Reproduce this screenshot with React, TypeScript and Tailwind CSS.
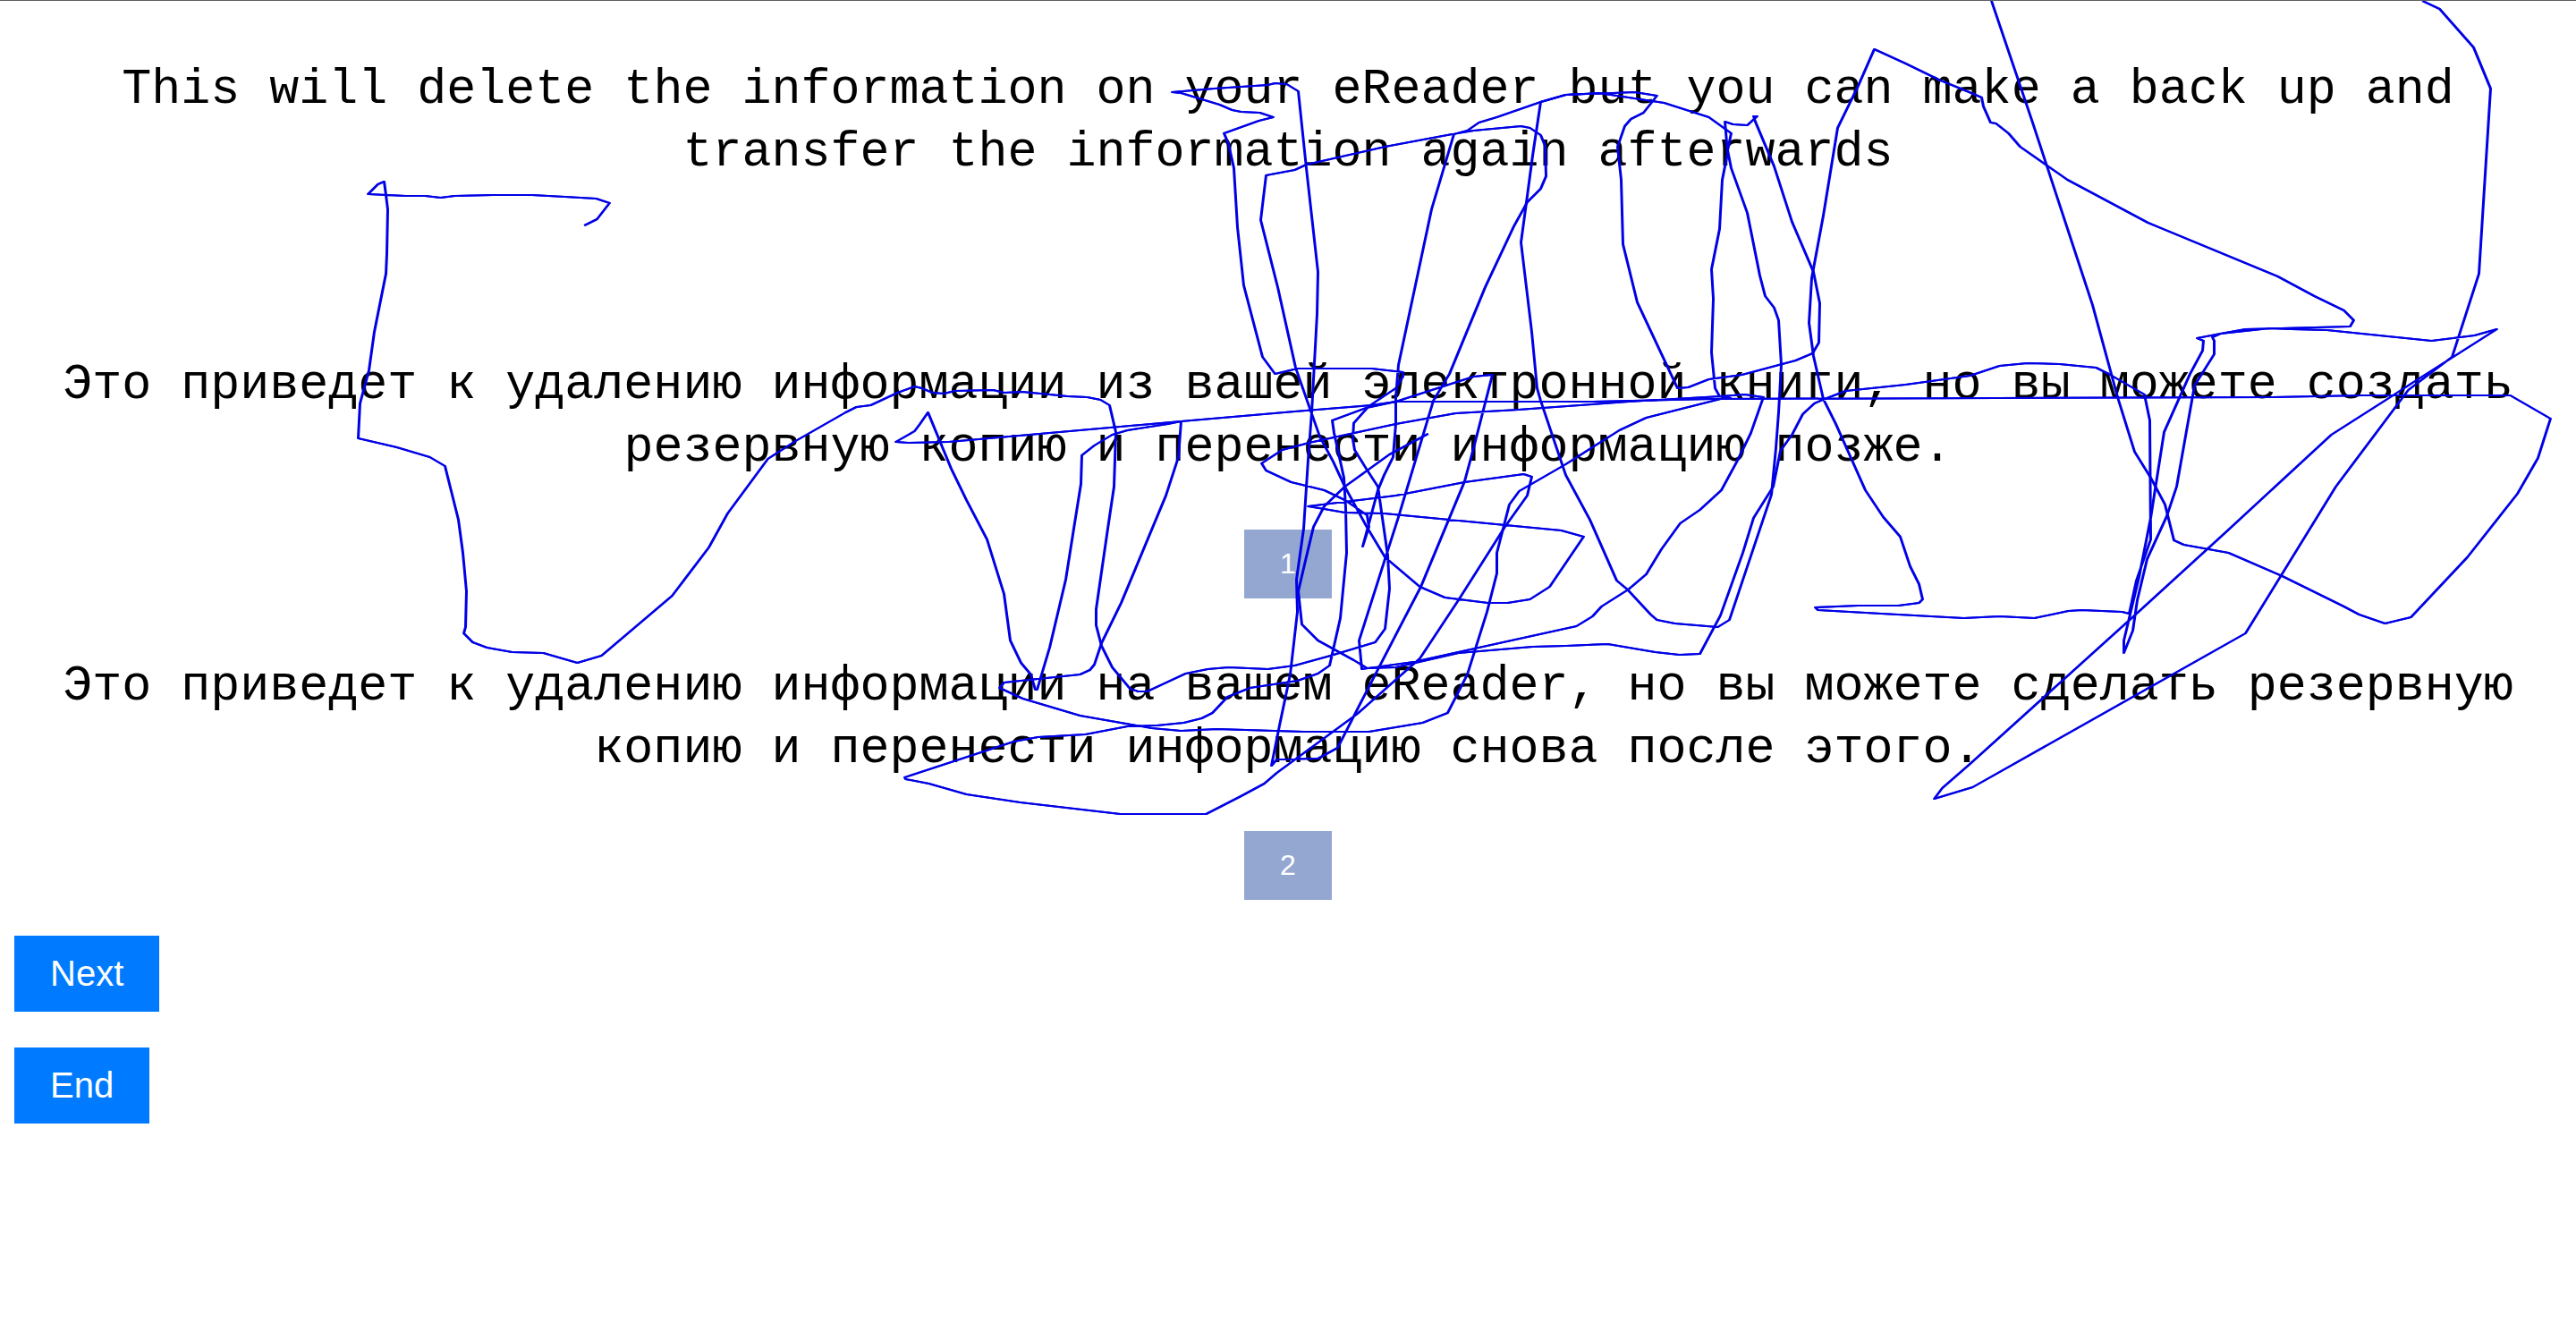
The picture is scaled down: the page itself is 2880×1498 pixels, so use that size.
const pen = [
  // left sweep and first loops
  '653,251 667,244 681,226 666,221 631,219 594,217 551,217 508,218 492,220 475,218 453,218 411,216 422,205 429,202 431,217 433,233 432,283 431,305 418,370 412,413 402,450 400,489 443,499 480,510 497,520 512,580 517,617 521,660 520,700 518,707 528,717 544,723 572,728 607,729 645,740 672,732 751,665 792,611 813,573 858,512 889,492 945,460 957,454 973,452 1003,438 1022,431 1030,433 1042,438 1055,439 1067,436 1110,435 1122,438 1142,437 1163,439 1193,442 1215,443 1230,446 1240,452 1247,482 1245,543 1238,590 1225,680 1225,698 1231,721 1243,745 1263,769 1272,772 1282,772 1325,752 1350,747 1373,745 1417,747 1447,743 1487,732 1537,717 1548,702 1553,657 1551,620 1540,543 1527,523 1514,502 1512,490 1513,472 1530,453 1560,433 1568,420 1568,415 1533,411 1450,411 1425,417 1411,398 1390,318 1383,253 1379,187 1373,160 1368,148 1407,134 1423,130 1408,125 1387,124 1377,122 1363,116 1320,103 1310,102 1357,98 1417,94 1425,92 1438,93 1451,101 1460,187 1473,303 1472,350 1466,460 1462,513 1457,590 1449,647 1450,683 1442,753 1430,810 1421,855 1427,848 1473,847 1495,835 1518,790 1563,703 1588,655 1637,537 1647,500 1668,418 1647,420 1560,448 1527,455 1489,469 1491,483 1502,533 1504,567 1505,617 1498,690 1486,743 1473,752 1450,760 1397,768 1372,778 1355,796 1343,802 1323,807 1293,810 1260,811 1213,820 1160,823 1133,828 1011,868 1012,870 1038,875 1080,887 1140,896 1252,909 1348,909 1387,889 1413,875 1427,863 1517,797 1587,735 1630,670 1682,588 1707,553 1712,532 1703,529 1637,538 1560,553 1462,565 1480,568 1503,572 1547,573 1745,592 1770,599 1732,655 1710,669 1685,673 1663,673 1615,667 1587,655 1548,622 1527,587 1503,543 1490,515 1475,487 1463,453 1448,410 1428,320 1409,245 1415,195 1447,189 1460,183 1548,163 1623,149 1647,145 1700,140 1710,142 1722,150 1727,162 1728,196 1722,210 1707,225 1692,252 1660,320 1620,417 1602,447 1593,477 1563,577 1547,627 1519,715 1522,747 1580,739 1630,728 1762,699 1780,688 1790,677 1820,658 1840,641 1857,613 1878,584 1900,569 1924,547 1943,512 1957,483 1971,443 1950,440 1923,442 1820,448 1697,457 1627,461 1560,473 1463,494 1433,502 1410,517 1415,525 1443,538 1480,547 1503,558 1528,575 1530,588 1523,610 1540,547 1547,530 1557,510 1560,473 1560,443 1563,407 1600,233 1625,149 1640,145 1653,136 1673,130 1722,113 1750,105 1827,102 1852,106 1837,125 1823,132 1816,140 1808,163 1812,200 1814,272 1830,337 1875,433 1887,432 1910,423 1947,418 2007,402 2026,394 2033,382 2034,338 2027,303 2003,247 1983,185 1962,135 1960,129 1964,129 1953,139 1937,138 1928,135 1931,170 1925,200 1922,255 1915,290 1913,300 1915,333 1913,393 1917,433 1922,442 1935,444',
  // centre loops and the long baseline to the right edge
  '1923,445 1840,466 1810,480 1750,518 1698,548 1687,563 1673,617 1673,640 1662,683 1640,753 1618,796 1590,807 1530,817 1457,817 1360,814 1320,816 1287,813 1207,799 1143,780 1117,768 1122,762 1207,753 1218,748 1223,742 1231,718 1253,673 1303,553 1317,510 1320,470 1305,473 1260,480 1243,485 1223,497 1209,508 1208,540 1200,590 1191,647 1173,723 1159,770 1157,770 1152,753 1141,740 1129,715 1122,663 1103,602 1080,558 1063,523 1037,460 1028,473 1022,481 1001,493 1015,494 1060,493 1320,470 1447,459 1533,452 1560,448 1780,448 1913,445 2232,444 2540,443 2640,441 2806,441 2851,467 2837,511 2814,551 2758,622 2695,689 2666,696 2637,686 2620,677 2551,643 2491,617 2441,608 2430,603 2420,563 2404,533 2386,504 2367,443 2339,340 2271,133 2226,0',
  // right side sweep, back to the centre
  '2708,0 2727,9 2765,52 2784,98 2771,305 2741,398 2692,435 2611,543 2510,707 2205,879 2162,892 2171,880 2202,853 2386,687 2489,593 2606,485 2675,441 2695,428 2791,367 2766,374 2718,380 2601,368 2561,367 2537,366 2482,372 2456,377 2463,380 2462,391 2448,417 2419,482 2404,578 2391,644 2374,715 2374,729 2384,704 2389,670 2400,624 2422,576 2433,543 2453,430 2475,395 2475,380 2473,376 2482,372 2510,367 2627,364 2631,357 2620,346 2587,330 2546,308 2401,248 2311,200 2258,163 2245,148 2231,137 2225,136 2217,118 2215,108 2201,102 2167,88 2130,70 2095,54 2077,95 2054,142 2038,240 2025,310 2022,360 2027,397 2038,445 2052,473 2085,547 2105,577 2124,599 2135,632 2145,652 2149,669 2145,673 2122,676 2077,676 2029,678 2032,681 2103,685 2195,690 2235,688 2274,690 2312,682 2327,681 2372,683 2380,685 2388,648 2404,602 2403,469 2397,440 2357,417 2343,410 2302,406 2266,405 2235,408 2202,419 2130,429 2063,436 2037,446 2028,450 2015,462 2003,485 1990,503 1982,543 1960,578 1948,617 1923,687 1900,730 1877,731 1850,728 1797,719 1750,721 1713,722 1630,729 1560,745 1528,746 1513,737 1473,715 1455,697 1451,660 1458,630 1468,588 1480,565 1503,543 1553,507 1596,484',
  // narrow arch
  '1722,113 1750,105 1787,103 1860,114 1910,130 1935,148 1931,167 1935,187 1953,237 1967,307 1973,330 1983,343 1988,357 1991,407 1988,460 1985,500 1980,552 1933,692 1920,700 1872,696 1852,692 1845,686 1819,658 1807,648 1777,580 1750,530 1722,447 1718,433 1712,370 1700,270 1705,233 1713,173 1722,113',
];

function PenStrokes() {
  return (
    <svg
      className="pointer-events-none absolute top-0 left-0 w-full"
      viewBox="0 0 2880 912"
      fill="none"
      stroke="#0000e6"
      strokeWidth="2"
      strokeLinejoin="round"
      aria-hidden="true"
    >
      <g id="pen">
        {pen.map((points, i) => (
          <polyline key={i} points={points} />
        ))}
      </g>
      <use href="#pen" x="1" />
    </svg>
  );
}

function Phrase({ children }: { children: string }) {
  return (
    <p className="text-center font-[Consolas,'Liberation_Mono',monospace] text-[55px] leading-[70px] text-black">
      {children}
    </p>
  );
}

function Choice({ label }: { label: string }) {
  return (
    <button type="button" className="bg-[#94a7d1] px-10 py-5 text-[32px] leading-[37px] text-white">
      {label}
    </button>
  );
}

function Action({ label }: { label: string }) {
  return (
    <button type="button" className="bg-[#007bff] px-10 py-5 text-[40px] leading-[45px] text-white">
      {label}
    </button>
  );
}

export default function App() {
  return (
    <main className="relative min-h-screen overflow-hidden border-t border-[#5f5f5f] bg-white px-4 pt-[65px] font-['Liberation_Sans',Arial,sans-serif]">
      <Phrase>
        This will delete the information on your eReader but you can make a back up and transfer the information again afterwards
      </Phrase>
      <div className="mt-[190px] flex flex-col items-center gap-14">
        <Phrase>
          Это приведет к удалению информации из вашей электронной книги, но вы можете создать резервную копию и перенести информацию позже.
        </Phrase>
        <Choice label="1" />
      </div>
      <div className="mt-16 flex flex-col items-center gap-14">
        <Phrase>
          Это приведет к удалению информации на вашем eReader, но вы можете сделать резервную копию и перенести информацию снова после этого.
        </Phrase>
        <Choice label="2" />
      </div>
      <div className="mt-10 flex flex-col items-start gap-10">
        <Action label="Next" />
        <Action label="End" />
      </div>
      <PenStrokes />
    </main>
  );
}
